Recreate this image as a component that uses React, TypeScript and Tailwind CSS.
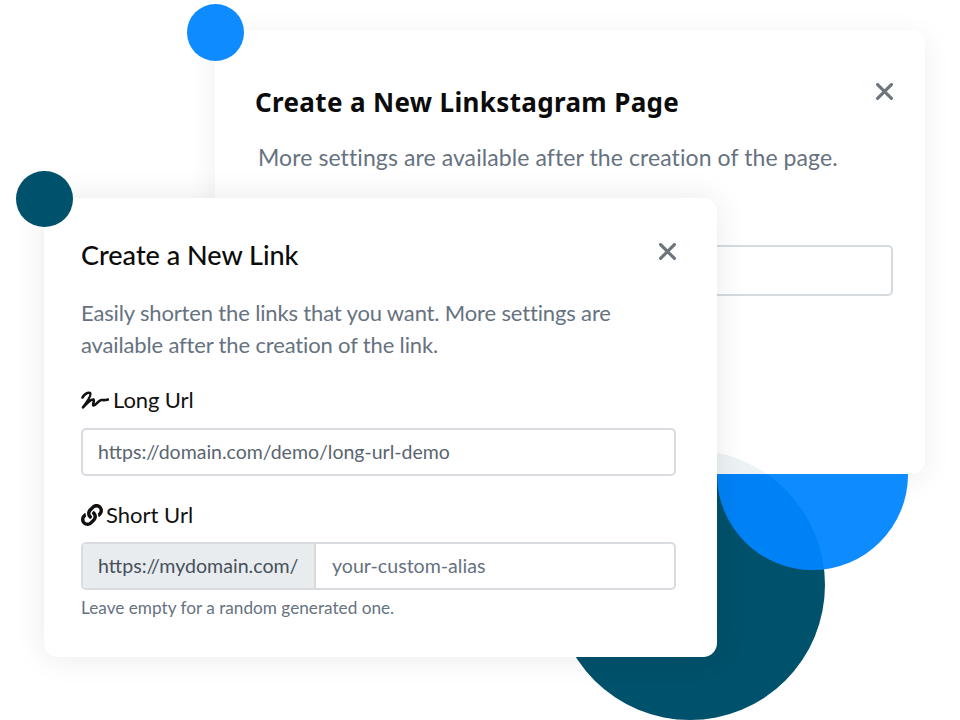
import { FaLink } from "react-icons/fa";

function CloseIcon({ className }: { className: string }) {
  return (
    <svg viewBox="0 0 16 16" className={className} fill="none" stroke="currentColor" strokeWidth="3" strokeLinecap="round">
      <path d="M1.5 1.5l13 13M14.5 1.5l-13 13" />
    </svg>
  );
}

function SquiggleIcon() {
  return (
    <svg viewBox="0 0 28 18" className="h-[18px] w-[28px]" fill="none" stroke="#111" strokeWidth="2.6" strokeLinecap="round" strokeLinejoin="round">
      <path d="M1.500 6.500C3 3 7 1 9 2c2 1.500-3 9-7 14.500C6 12 10.500 8 12.500 8.500c1.500.5-1.500 5.500 0 6 2 .5 5-5.500 8-5.500 1.500 0 3 .5 6.500-.5" />
    </svg>
  );
}

export default function App() {
  return (
    <div className="relative h-[720px] w-[960px] overflow-hidden bg-white font-['Lato',sans-serif]">
      {/* decorative circles behind the cards */}
      <div className="absolute left-[555px] top-[450px] h-[270px] w-[270px] rounded-full bg-[#00516b]" />

      {/* back card */}
      <div className="absolute left-[215px] top-[30px] flex h-[444px] w-[710px] flex-col rounded-[14px] bg-white/93 pl-[40px] pr-[32px] pt-[53px] shadow-[0_6px_30px_rgba(0,0,0,0.07)]">
        <div className="flex items-start justify-between">
          <h2 className="font-['Noto_Sans',sans-serif] text-[26px] font-bold leading-[38px] tracking-[0.35px] text-[#0b0b0b]">
            Create a New Linkstagram Page
          </h2>
          <CloseIcon className="h-[17px] w-[17px] text-[#6c757d]" />
        </div>
        <p className="ml-[3px] mt-[20px] text-[23px] leading-[32px] tracking-[0.09px] text-[#66727f]">
          More settings are available after the creation of the page.
        </p>
        <div className="mt-[72px] h-[51px] rounded-[5px] border-2 border-[#d5dadf]" />
      </div>

      {/* half circle under the back card */}
      <div className="absolute left-[717px] top-[474px] h-[96px] w-[191px] rounded-b-[96px] bg-[#0085ff]/95" />

      <div className="absolute left-[187px] top-[4px] h-[57px] w-[57px] rounded-full bg-[#0e8cff]" />

      {/* front card */}
      <div className="absolute left-[44px] top-[198px] flex h-[459px] w-[673px] flex-col rounded-[14px] bg-white pl-[37px] pr-[41px] pt-[38px] shadow-[0_0_32px_rgba(0,0,0,0.09)]">
        <div className="flex items-start justify-between">
          <h2 className="text-[27px] font-medium leading-[38px] text-[#0b0b0b]">Create a New Link</h2>
          <CloseIcon className="mt-[7px] h-[17px] w-[17px] text-[#6c757d]" />
        </div>
        <p className="mt-[23px] text-[22px] leading-[32px] tracking-[-0.15px] text-[#66727f]">
          Easily shorten the links that you want. More settings are available after the creation of the link.
        </p>

        <label className="mt-[24px] flex items-center gap-[4px] text-[22px] leading-[30px] tracking-[-0.1px] text-[#111]">
          <SquiggleIcon />
          Long Url
        </label>
        <div className="mt-[13px] flex h-[48px] items-center rounded-[5px] border-2 border-[#d8dce1] px-[15px] text-[19.5px] text-[#5a6570]">
          https://domain.com/demo/long-url-demo
        </div>

        <label className="mt-[24px] flex items-center gap-[3px] text-[22px] leading-[30px] text-[#111]">
          <FaLink className="h-[22px] w-[22px]" />
          Short Url
        </label>
        <div className="mt-[12px] flex h-[48px] overflow-hidden rounded-[5px] border-2 border-[#d8dce1] text-[19.6px]">
          <div className="flex w-[233px] items-center border-r-2 border-[#d8dce1] bg-[#e9ecef] pl-[15px] text-[#46505a]">
            https://mydomain.com/
          </div>
          <div className="flex flex-1 items-center pl-[16px] text-[#66727f]">your-custom-alias</div>
        </div>
        <p className="mt-[6px] text-[17.2px] leading-[24px] text-[#66727f]">Leave empty for a random generated one.</p>
      </div>

      <div className="absolute left-[16px] top-[171px] h-[56px] w-[57px] rounded-full bg-[#00516b]" />
    </div>
  );
}
